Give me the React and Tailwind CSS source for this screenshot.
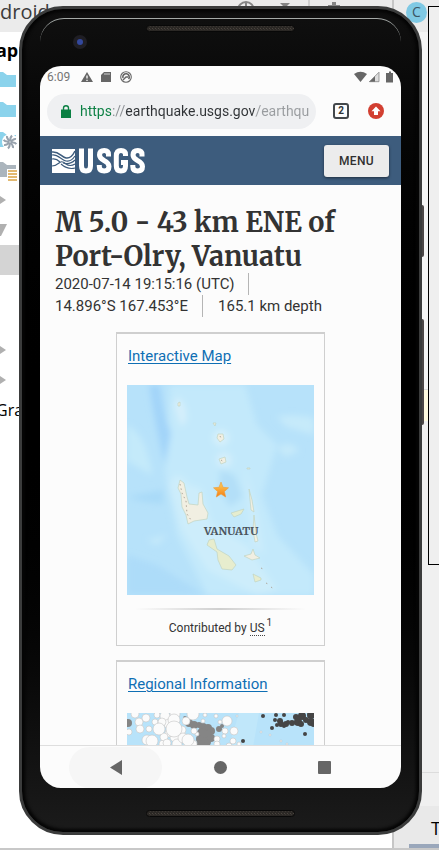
import React from "react";

const islands = "#f1efe2";

function Folder({ color }) {
  return (
    <svg width="16" height="18" viewBox="0 0 16 18" aria-hidden="true">
      <path d="M0 1H3L7 4H16V16H0Z" fill={color} />
    </svg>
  );
}

function Caret() {
  return (
    <svg width="6" height="10" viewBox="0 0 6 10" aria-hidden="true">
      <path d="M0 1L6 5L0 9Z" fill="#b0b0b0" />
    </svg>
  );
}

function Fan() {
  return (
    <svg className="absolute top-[9px] left-[2px]" width="16" height="16" viewBox="-8 -8 16 16" aria-hidden="true">
      <circle r="8" fill="#fff" />
      {[0, 45, 90, 135, 180, 225, 270, 315].map((a) => (
        <path key={a} d="M1 0Q3 -3.500 6 -3" fill="none" stroke="#98a2ad" strokeWidth="2" transform={`rotate(${a})`} />
      ))}
    </svg>
  );
}

function TreeRow({ children, selected }) {
  return (
    <li className={`relative flex h-[30px] items-center ${selected ? "bg-[#d4d4d4]" : ""}`}>{children}</li>
  );
}

function Desktop() {
  return (
    <div className="col-start-1 row-start-1 flex min-h-screen flex-col overflow-hidden bg-white font-['Open_Sans','Noto_Sans',sans-serif] text-black">
      <div className="flex h-8 shrink-0 bg-[#ebebeb]">
        <span className="flex-1 text-xl leading-6 text-[#3c3c3c]">droid</span>
        <svg width="112" height="10" viewBox="0 0 112 10" aria-hidden="true" fill="none" stroke="#858585" strokeWidth="2">
          <path d="M0 10A8 8 0 0 1 16 10M8 3V9M2 7H14" />
          <path d="M42 3H52L47 8Z" fill="#858585" stroke="none" />
          <path d="M71 0V10" stroke="#cfcfcf" />
          <path d="M90 7H102M96 2V6" strokeWidth="4" />
        </svg>
        <div className="ml-[42px] flex w-[47px] justify-center border-l-2 border-[#c6c6c6] pt-[2px]">
          <span className="flex size-[21px] items-center justify-center rounded-full bg-[#7fc9e4] pb-px text-sm text-[#3c5663]">C</span>
        </div>
      </div>
      <div className="flex min-h-0 flex-1">
        <ul className="min-w-0 flex-1 pt-[3px] text-lg">
          <TreeRow><span className="-ml-1 font-bold">app</span></TreeRow>
          <TreeRow><Folder color="#8bd3ec" /></TreeRow>
          <TreeRow><Folder color="#8bd3ec" /></TreeRow>
          <TreeRow><Folder color="#8bd3ec" /><Fan /></TreeRow>
          <TreeRow>
            <Folder color="#abb5bd" />
            <svg className="absolute top-[14px] left-[7px]" width="12" height="14" viewBox="0 0 12 14" aria-hidden="true">
              <path d="M0 0H12V14H0Z" fill="#fff" />
              <path d="M1 2H10M1 5H10M1 8H10M1 11H10" stroke="#d9a343" strokeWidth="1.5" />
            </svg>
          </TreeRow>
          <TreeRow><Caret /></TreeRow>
          <TreeRow>
            <svg width="8" height="12" viewBox="0 0 8 12" aria-hidden="true"><path d="M0 0H7L1 12H0Z" fill="#b0b0b0" /></svg>
          </TreeRow>
          <TreeRow selected />
          <TreeRow />
          <TreeRow />
          <TreeRow><Caret /></TreeRow>
          <TreeRow><Caret /></TreeRow>
          <TreeRow><span className="-ml-1 text-base">Gra</span></TreeRow>
        </ul>
        <div className="flex w-[47px] flex-col border-l-2 border-[#c6c6c6] bg-[#f0f0f0]">
          <div className="h-[358px] border-b border-[#ddd] bg-[#f5f5f5]" />
          <div className="h-[31px] bg-[#fffbe0]" />
          <div className="flex-1" />
          <div className="h-[34px] border-t border-[#dcdcdc]" />
          <div className="flex h-[42px] flex-col justify-between bg-[#e9e9e9] pt-[10px] pl-[15px]">
            <span className="pl-[22px] text-lg leading-6">T</span>
            <span className="h-1 bg-[#9aa7bb]" />
          </div>
        </div>
      </div>
      <div className="h-[2px] shrink-0 bg-[#c8c8c8]" />
    </div>
  );
}

function Grille() {
  return (
    <svg className="h-[7px] w-[149px]" viewBox="0 0 149 7" aria-hidden="true">
      <defs>
        <pattern id="mesh" width="3" height="3" patternUnits="userSpaceOnUse">
          <rect width="3" height="3" fill="#2b2825" />
          <rect width="1" height="1" fill="#4a443e" />
          <rect x="1" y="1" width="1" height="1" fill="#3b3733" />
        </pattern>
      </defs>
      <rect x="0.5" y="0.5" width="148" height="6" rx="3" fill="url(#mesh)" stroke="#080808" />
    </svg>
  );
}

function StatusBar() {
  return (
    <div className="flex h-[22px] shrink-0 items-center pr-[7px] pl-[7px] text-[#757575]">
      <span className="w-[34px] text-xs">6:09</span>
      <svg width="51" height="12" viewBox="0 0 51 12" aria-hidden="true" fill="#666">
        <path d="M6 1L12 11H0Z" />
        <path d="M6 4.5V7.5M6 8.7V10" stroke="#fff" strokeWidth="1.3" />
        <path d="M23 1H30V11H20V4Z" />
        <path d="M24 2V4M26 2V4M28 2V4" stroke="#fff" strokeWidth="0.7" />
        <g fill="none" stroke="#666">
          <circle cx="45" cy="6" r="5.3" strokeWidth="1.1" />
          <path d="M42 7A3.2 3.2 0 1 1 47.5 8" strokeWidth="1.6" />
          <path d="M42 9L45 6H47" strokeWidth="1.4" />
        </g>
      </svg>
      <svg className="ml-auto" width="40" height="12" viewBox="0 0 40 12" aria-hidden="true" fill="#666">
        <path d="M0 3Q6.500 -1.500 13 3L6.500 11Z" />
        <path d="M15 11L25 1V11Z" fill="#ddd" />
        <path d="M15 11L21 5V11Z" />
        <path d="M15.500 10.700L25 1.200V10.700Z" fill="none" stroke="#888" strokeWidth="0.8" />
        <path d="M33 2H35V0.500H37V2H39V11.500H32V2Z" />
      </svg>
    </div>
  );
}

function AddressBar() {
  return (
    <div className="flex h-12 shrink-0 items-center pr-[17px] pb-[2px] pl-[7px]">
      <label className="flex h-[35px] min-w-0 flex-1 items-center rounded-full bg-[#eff0f2] pr-[5px] pl-[14px]">
        <svg className="mr-[9px] shrink-0" width="10" height="13" viewBox="0 0 10 13" aria-hidden="true">
          <path d="M0 4.500H10V13H0Z" fill="#0b8043" />
          <path d="M2.500 5V3Q2.500 0.800 5 0.800Q7.500 0.800 7.500 3V5" fill="none" stroke="#0b8043" strokeWidth="1.400" />
        </svg>
        <input
          type="text"
          aria-label="Address"
          defaultValue="https://earthquake.usgs.gov/earthqu"
          className="w-full min-w-0 bg-[linear-gradient(90deg,#0b8043_31px,#8b8f93_31px,#8b8f93_45px,#303336_45px,#303336_176px,#999c9f_176px)] bg-clip-text text-sm text-transparent outline-none"
        />
      </label>
      <button type="button" aria-label="Tabs" className="ml-[17px] flex size-4 items-center justify-center rounded-[3px] border-2 border-[#43474b] text-[10px] leading-none font-bold text-[#303336]">
        2
      </button>
      <button type="button" aria-label="Update" className="ml-[19px]">
        <svg width="16" height="16" viewBox="0 0 16 16" aria-hidden="true">
          <circle cx="8" cy="8" r="8" fill="#d23f31" />
          <path d="M8 3.500L12.500 8.300H10V12H6V8.300H3.500Z" fill="#fff" />
        </svg>
      </button>
    </div>
  );
}

function SiteHeader() {
  return (
    <header className="flex h-[49px] shrink-0 items-center justify-between bg-[#3d5c7d] pr-3 pl-3">
      <a href="#home" aria-label="USGS home" className="flex items-center">
        <svg width="94" height="26" viewBox="0 0 94 26" aria-hidden="true">
          <path d="M0 1H23V25H0Z" fill="#fff" />
          <g fill="none" stroke="#3d5c7d">
            <path d="M0 4C7 3 9 9 14 10Q19 11 23 3" strokeWidth="1.500" />
            <path d="M0 7C6 6 9 12 14 13Q19 14 23 8" strokeWidth="1.200" />
            <path d="M11 15Q18 17 23 12" strokeWidth="1.200" />
            <path d="M0 18C8 18 7 10 14 16Q18 19 23 16" strokeWidth="1.200" />
            <path d="M9 16Q16 22 23 20" strokeWidth="1.200" />
            <path d="M0 11Q4 10 8 14" strokeWidth="1.200" />
          </g>
          <g fill="none" stroke="#fff" strokeWidth="5">
            <path d="M29.500 0.500V18Q29.500 23 34 23Q38.500 23 38.500 18V0.500" />
            <path d="M56.500 8.500V6.500Q56.500 2.500 52.300 2.500Q47.500 2.500 47.500 7Q47.500 10 52 12.500Q57 15 57 18.500Q57 23 52.200 23Q47.300 23 47.300 18.500V17" />
            <path d="M73.500 8V6.500Q73.500 2.500 69 2.500Q64.300 2.500 64.300 8V18Q64.300 23 69 23Q73.500 23 73.500 18V14.500H69" />
            <path d="M90 8.500V6.500Q90 2.500 85.800 2.500Q81 2.500 81 7Q81 10 85.500 12.500Q90.500 15 90.500 18.500Q90.500 23 85.700 23Q80.800 23 80.800 18.500V17" />
          </g>
        </svg>
      </a>
      <button type="button" className="h-8 w-[65px] rounded-[3px] bg-[#ececec] text-xs font-medium tracking-wide text-[#303030] shadow-[0_1px_3px_rgba(0,0,0,0.5)]">
        MENU
      </button>
    </header>
  );
}

function LocationMap() {
  return (
    <svg className="block h-[210px] w-full" viewBox="0 0 187 210" preserveAspectRatio="xMidYMid slice" role="img" aria-label="Vanuatu">
      <defs>
        <filter id="soft" x="-20%" y="-20%" width="140%" height="140%"><feGaussianBlur stdDeviation="3" /></filter>
        <linearGradient id="gold" x2="0" y2="1"><stop stopColor="#ffd25a" /><stop offset="1" stopColor="#f47d14" /></linearGradient>
      </defs>
      <rect width="187" height="210" fill="#b7e2fa" />
      <g filter="url(#soft)">
        <path d="M43 0H118L130 40L150 60L135 110L150 150L187 190V210H80L50 150L38 90Z" fill="#c3e9fb" />
        <path d="M0 40Q20 50 25 90L0 76Z" fill="#c4eafa" />
        <path d="M22 0H33Q36 28 44 48L38 80Q28 40 22 0Z" fill="#a2d4f9" />
        <path d="M0 112L36 105V119L14 116Z" fill="#a9daf8" />
        <path d="M93 84L108 90L116 112L103 122L92 105Z" fill="#b3dff8" />
        <path d="M50 12Q61 18 59 36L54 42L47 20Z" fill="#d5effb" />
        <path d="M42 100Q50 80 62 100L74 103L85 140L120 160L150 205L130 210L80 185L54 143Z" fill="#cdedfb" />
        <path d="M118 82L131 130L137 170L124 160Z" fill="#ccecfb" />
        <path d="M150 32Q165 28 187 33V50L160 42ZM150 62Q165 55 172 66L158 72ZM20 155L40 150L30 160Z" fill="#c6eafa" />
        <path d="M0 170L30 180L78 210H0Z" fill="#addcf9" />
        <circle cx="94" cy="53" r="8" fill="#d6f0fb" /><circle cx="97" cy="75" r="8" fill="#d3eefb" />
      </g>
      <g fill={islands} stroke="#c2d4c2" strokeWidth="0.700">
        <path d="M53 95L57 98L60 112L62 119L71 120L72 108L75 107L76 119L81 128L80 134L67 136L61 139L59 130L55 122L54 109L51 103Z" />
        <path d="M82 155L87 154L90 164L102 171L109 180L105 185L95 184L91 175L90 167L80 160Z" fill="#e7edce" />
        <path d="M104 128L117 124L114 129L107 132Z" fill="#e6edcf" />
        <path d="M122 104L125 115L127 127L124 125ZM127 130L128 139L129 148L131 156L128 157L126 145Z" />
        <path d="M117 171L124 169L126 164L128 170L133 173L125 175Z" />
        <path d="M126 189L134 193L134 195L128 197Z" fill="#e7edce" />
        <path d="M91 49L96 49L97 54L93 57L90 53ZM92 74L98 72L99 77L94 79Z" />
        <path d="M51 18L53 17V21H51ZM86 38L89 38L88 41ZM120 83H123V84H120Z" />
      </g>
      <g fill="none" stroke="#a99e91" strokeWidth="0.900" strokeDasharray="1.500 3">
        <path d="M53 99L55 108L59 116L60 129L64 135M93 51L95 55M94 75L97 77M134 183L136 184M139 198L141 199M144 202L147 204" />
      </g>
      <text x="77" y="150" fontFamily="Merriweather, Liberation Serif, serif" fontSize="11" fontWeight="700" fill="#4b555d">VANUATU</text>
      <path d="M94 97L96 102.300L101.500 102.800L97.400 106.500L98.700 112L94 109L89.300 112L90.600 106.500L86.500 102.800L92 102.300Z" fill="url(#gold)" stroke="#ee9a38" strokeWidth="0.600" />
    </svg>
  );
}

const rings = [
  [8, 1, 4], [19, 5, 4], [12, 9, 4], [13, 16, 4], [2, 19, 3], [30, 2, 3], [28, 9, 3], [22, 16, 3],
  [38, 3, 5], [48, 1, 5], [42, 11, 5], [59, 8, 4], [55, 17, 4], [48, 24, 5], [36, 31, 4], [50, 31, 5],
  [42, 20, 4], [37, 24, 4], [35, 9, 4], [56, 25, 5], [66, 31, 4], [40, 30, 4],
  [66, 1, 6], [47, 7, 6], [32, 16, 6], [20, 27, 5], [25, 28, 6], [47, 16, 8], [61, 27, 6], [70, 21, 2],
  [67, 18, 3], [78, 2, 2], [76, 8, 2], [100, 8, 5], [89, 3, 2], [98, 18, 3], [107, 18, 4], [93, 9, 2],
  [90, 26, 3], [90, 31, 3], [106, 28, 3], [97, 23, 2], [102, 33, 3], [112, 31, 2], [110, 3, 1],
  [134, 19, 1], [143, 22, 1], [154, 28, 1], [160, 31, 1],
];
const shallow = [
  [1, 10, 4], [58, 5, 2], [62, 10, 4], [67, 12, 4], [72, 12, 3], [76, 14, 4], [81, 15, 4], [84, 18, 4],
  [75, 20, 5], [80, 22, 5], [73, 26, 4], [79, 29, 5], [84, 25, 4], [74, 31, 4], [92, 16, 3], [95, 13, 2],
];
const quakes = [
  [136, 3, 2], [149, 2, 2], [157, 2, 2], [148, 7, 2], [153, 8, 3], [150, 12, 2], [157, 13, 2], [145, 15, 2],
  [154, 11, 3], [159, 11, 3], [165, 10, 3], [169, 4, 3], [171, 9, 4], [175, 3, 4], [174, 11, 3], [179, 7, 3],
  [184, 2, 4], [184, 9, 4], [186, 12, 2], [161, 9, 2], [178, 21, 2], [116, 28, 2],
];

function SeismicityMap() {
  return (
    <svg className="block h-[140px] w-full" viewBox="0 0 187 140" preserveAspectRatio="xMidYMin slice" role="img" aria-label="Regional seismicity">
      <rect width="187" height="140" fill="#b8e3fa" />
      <path d="M112 0H132L125 40H100Z" fill="#c0e7fa" />
      <g fill="#858585">
        {shallow.map(([x, y, r]) => <circle key={`${x}-${y}`} cx={x} cy={y} r={r} />)}
      </g>
      <g fill="#fbfbfb" stroke="#c4c4c4" strokeWidth="0.600">
        {rings.map(([x, y, r]) => <circle key={`${x}-${y}`} cx={x} cy={y} r={r} />)}
      </g>
      <g fill="#454545">
        {quakes.map(([x, y, r]) => <circle key={`${x}-${y}`} cx={x} cy={y} r={r} />)}
      </g>
    </svg>
  );
}

function Card({ title, children }) {
  return (
    <section className="mx-auto w-[209px] border border-t-2 border-[#cfcfcf] px-[10px]">
      <h2 className="flex h-[51px] items-center pb-[6px] pl-px">
        <a href="#details" className="text-[15px] text-[#0f6fb4] underline underline-offset-2">{title}</a>
      </h2>
      {children}
    </section>
  );
}

function EventPage() {
  return (
    <main className="min-h-0 flex-1 overflow-hidden px-[15px] pt-[20px] text-[#333]">
      <h1 className="font-['Merriweather','DejaVu_Serif_Condensed',serif] text-[27px] leading-[34px] font-bold whitespace-nowrap">
        M 5.0 - 43 km ENE of
        <br />
        Port-Olry, Vanuatu
      </h1>
      <ul className="flex flex-wrap text-[15px] leading-[22px]">
        <li className="mr-[15px] border-r border-[#b5b5b5] pr-[14px]">2020-07-14 19:15:16 (UTC)</li>
        <li className="mr-[15px] border-r border-[#b5b5b5] pr-[14px]">14.896°S 167.453°E</li>
        <li>165.1 km depth</li>
      </ul>
      <div className="mt-[15px] flex flex-col gap-[14px]">
        <Card title="Interactive Map">
          <LocationMap />
          <div className="mx-2 mt-[13px] h-[2px] bg-linear-to-r from-transparent via-[#cfcfcf] to-transparent" />
          <p className="flex h-[35px] items-center justify-center gap-[2px] text-xs">
            <span>Contributed by <abbr className="border-b border-dotted border-[#444] no-underline">US</abbr></span>
            <sup className="text-[10px]">1</sup>
          </p>
        </Card>
        <Card title="Regional Information">
          <SeismicityMap />
        </Card>
      </div>
    </main>
  );
}

function NavBar() {
  return (
    <nav className="flex h-[43px] shrink-0 items-center justify-between border-t border-[#dedede] pr-[30px] pl-[29px]">
      <button type="button" aria-label="Back" className="flex h-[41px] w-[93px] items-center justify-center rounded-full bg-[#f6f6f6]">
        <svg width="12" height="15" viewBox="0 0 12 15" aria-hidden="true"><path d="M0 7.500L12 0V15Z" fill="#666" /></svg>
      </button>
      <button type="button" aria-label="Home" className="flex h-[41px] w-[93px] items-center justify-center">
        <span className="size-[13px] rounded-full bg-[#666]" />
      </button>
      <button type="button" aria-label="Recent apps" className="flex h-[41px] w-[93px] items-center justify-center">
        <span className="size-[13px] rounded-[1px] bg-[#666]" />
      </button>
    </nav>
  );
}

function Phone() {
  return (
    <div className="relative z-10 col-start-1 row-start-1 mt-[6px] mr-[17px] mb-[15px] ml-[19px] flex min-h-0 flex-col">
      <div className="absolute top-[199px] -right-[2px] h-[52px] w-[4px] rounded-sm bg-[#4b4646]" />
      <div className="absolute top-[313px] -right-[2px] h-[106px] w-[4px] rounded-sm bg-[#4b4646]" />
      <div className="relative flex min-h-0 flex-1 flex-col rounded-[44px] border-3 border-[#3b3c3c] bg-linear-to-b from-[#101010] via-black to-[#1b1b1b] px-[18px] shadow-[inset_0_0_3px_3px_#050505]">
        <div className="relative flex h-[57px] shrink-0 justify-center overflow-hidden pt-[16px]">
          <div className="absolute inset-x-0 top-[9px] h-6 rounded-t-[24px] border-t border-[#a5aaa8]" />
          <div className="absolute top-[26px] left-[33px] flex size-[14px] items-center justify-center rounded-full bg-[#1f1e24]">
            <span className="size-[6px] rounded-full bg-[#33489d]" />
          </div>
          <Grille />
        </div>
        <div className="flex min-h-0 flex-1 flex-col overflow-hidden rounded-[21px] bg-[#fcfcfc]">
          <StatusBar />
          <AddressBar />
          <SiteHeader />
          <EventPage />
          <NavBar />
        </div>
        <div className="flex h-[44px] shrink-0 justify-center pt-[22px]">
          <Grille />
        </div>
      </div>
    </div>
  );
}

export default function App() {
  return (
    <div className="grid h-screen grid-cols-1 grid-rows-1 overflow-hidden font-['Roboto',sans-serif]">
      <Desktop />
      <Phone />
      <div className="col-start-1 row-start-1 mt-[6px] h-[559px] w-[11px] justify-self-end border-y border-l border-black bg-[#efefef]" />
    </div>
  );
}
